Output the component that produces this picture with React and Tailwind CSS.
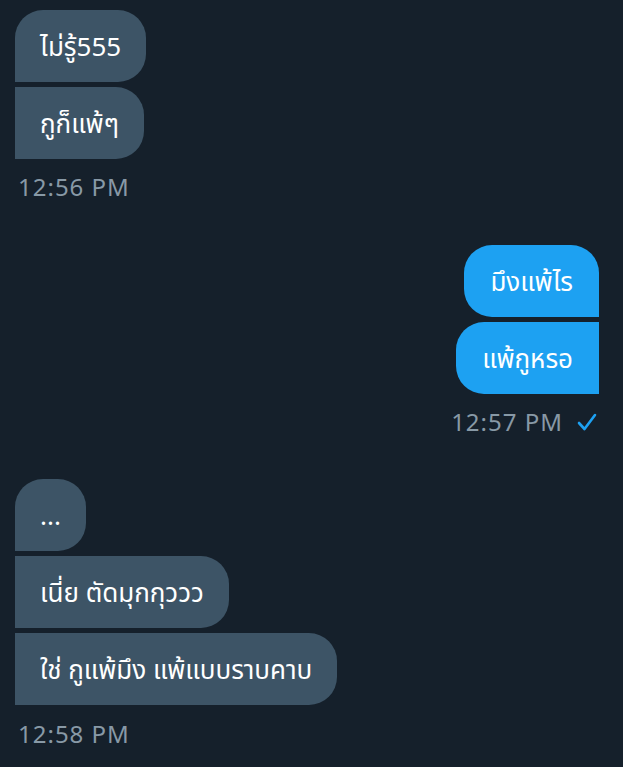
import React from "react";

const font = { fontFamily: '"Noto Sans", "Noto Sans Thai", "Loma", "Garuda", "DejaVu Sans", sans-serif' };

function Left({ text, shape }) {
  return (
    <div className={`h-[72px] flex items-center px-[25px] bg-[#3d5466] text-white text-[26px] ${shape}`}>
      {text}
    </div>
  );
}

function Right({ text, shape }) {
  return (
    <div className={`h-[72px] flex items-center px-[26px] bg-[#1da1f2] text-white text-[26px] ${shape}`}>
      {text}
    </div>
  );
}

export default function App() {
  return (
    <div className="w-[623px] h-[767px] overflow-hidden bg-[#15202b] pt-[10px] flex flex-col" style={font}>
      <div className="flex flex-col items-start pl-[15px] gap-[5px]">
        <Left text="ไม่รู้555" shape="rounded-[28px] rounded-bl-none" />
        <Left text="กูก็แพ้ๆ" shape="rounded-r-[28px]" />
      </div>
      <div className="h-[30px] mt-[13px] pl-[18px] flex items-center text-[24px] tracking-[1px] text-[#8899a6]">12:56 PM</div>

      <div className="mt-[43px] flex flex-col items-end pr-[24px] gap-[5px]">
        <Right text="มึงแพ้ไร" shape="rounded-[28px] rounded-br-none" />
        <Right text="แพ้กูหรอ" shape="rounded-l-[28px]" />
      </div>
      <div className="h-[30px] mt-[13px] pr-[26px] flex items-center justify-end gap-[14px] text-[24px] tracking-[1px] text-[#8899a6]">
        <span>12:57 PM</span>
        <svg width="20" height="18" viewBox="0 0 20 18" fill="none">
          <path d="M2 10 L7.5 16 L18 2" stroke="#1da1f2" strokeWidth="2.6" strokeLinecap="round" strokeLinejoin="round" />
        </svg>
      </div>

      <div className="mt-[42px] flex flex-col items-start pl-[15px] gap-[5px]">
        <Left text="..." shape="rounded-[28px] rounded-bl-none" />
        <Left text="เนี่ย ตัดมุกกุววว" shape="rounded-r-[28px]" />
        <Left text="ใช่ กูแพ้มึง แพ้แบบราบคาบ" shape="rounded-r-[28px]" />
      </div>
      <div className="h-[30px] mt-[14px] pl-[18px] flex items-center text-[24px] tracking-[1px] text-[#8899a6]">12:58 PM</div>
    </div>
  );
}
